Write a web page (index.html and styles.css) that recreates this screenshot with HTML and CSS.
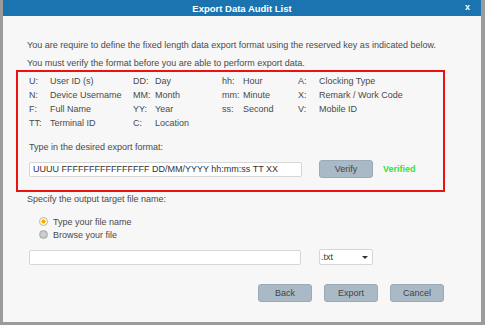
FILE: index.html
```html
<!DOCTYPE html>
<html>
<head>
<meta charset="utf-8">
<link rel="stylesheet" href="styles.css">
</head>
<body>
<div class="dialog">
  <div class="titlebar">
    <span class="title">Export Data Audit List</span>
    <span class="close">x</span>
  </div>
  <div class="content">
    <p class="line first">You are require to define the fixed length data export format using the reserved key as indicated below.</p>
    <p class="line second">You must verify the format before you are able to perform export data.</p>
    <div class="redbox">
      <div class="keys">
        <span>U:</span><span>User ID (s)</span><span>DD:</span><span>Day</span><span>hh:</span><span>Hour</span><span>A:</span><span>Clocking Type</span>
        <span>N:</span><span>Device Username</span><span>MM:</span><span>Month</span><span>mm:</span><span>Minute</span><span>X:</span><span>Remark / Work Code</span>
        <span>F:</span><span>Full Name</span><span>YY:</span><span>Year</span><span>ss:</span><span>Second</span><span>V:</span><span>Mobile ID</span>
        <span>TT:</span><span>Terminal ID</span><span>C:</span><span>Location</span><span></span><span></span><span></span><span></span>
      </div>
      <p class="line prompt">Type in the desired export format:</p>
      <div class="verify-row">
        <div class="textbox fmt">UUUU FFFFFFFFFFFFFFFF DD/MM/YYYY hh:mm:ss TT XX</div>
        <button class="btn verify">Verify</button>
        <span class="verified">Verified</span>
      </div>
    </div>
    <p class="line specify">Specify the output target file name:</p>
    <div class="radios">
      <div class="radio-row"><span class="radio on"></span><span>Type your file name</span></div>
      <div class="radio-row"><span class="radio"></span><span>Browse your file</span></div>
    </div>
    <div class="file-row">
      <div class="textbox filename"></div>
      <div class="select"><span>.txt</span><span class="arrow"></span></div>
    </div>
    <div class="actions">
      <button class="btn">Back</button>
      <button class="btn">Export</button>
      <button class="btn">Cancel</button>
    </div>
  </div>
</div>
</body>
</html>
```

FILE: styles.css
```css
html, body {
  margin: 0;
  padding: 0;
}
body {
  width: 485px;
  height: 325px;
  background: #9b9b9b;
  font-family: "Liberation Sans", Arial, sans-serif;
  font-size: 9px;
  color: #4a4a4a;
  overflow: hidden;
}
.dialog {
  margin-left: 3px;
  width: 478px;
  height: 322px;
  background: #f7f7f7;
  display: flex;
  flex-direction: column;
}
.titlebar {
  position: relative;
  height: 16px;
  background: #1b73b0;
  display: flex;
  align-items: center;
  justify-content: center;
}
.title {
  color: #ffffff;
  font-weight: bold;
  font-size: 9.5px;
}
.close {
  position: absolute;
  right: 11px;
  top: 2px;
  color: #fff;
  font-weight: bold;
  font-size: 9px;
}
.content {
  padding-left: 24px;
  display: flex;
  flex-direction: column;
}
.line {
  margin: 0;
  line-height: 12px;
}
.first {
  margin-top: 23px;
}
.second {
  margin-top: 6px;
}
.redbox {
  margin-left: -11px;
  margin-top: 1px;
  width: 414px;
  height: 116px;
  border: 2px solid #ee1111;
  padding: 2px 0 0 11px;
  box-sizing: content-box;
}
.keys {
  display: grid;
  grid-template-columns: 21px 83px 22px 67px 21px 55px 21px auto;
  grid-auto-rows: 14px;
  line-height: 14px;
  width: 410px;
}
.prompt {
  margin-top: 11px;
}
.verify-row {
  margin-top: 7px;
  display: flex;
  align-items: center;
}
.textbox {
  box-sizing: border-box;
  background: #ffffff;
  border: 1px solid #d6d6d6;
  border-radius: 2px;
  height: 15px;
  line-height: 13px;
  padding-left: 3px;
  color: #333;
}
.fmt {
  width: 273px;
}
.btn {
  font-family: "Liberation Sans", Arial, sans-serif;
  font-size: 9px;
  color: #444;
  background: #a9b9c5;
  border: 1px solid #9aaab6;
  border-radius: 3px;
  width: 54px;
  height: 18px;
  padding: 0;
}
.verify {
  margin-left: 17px;
}
.verified {
  margin-left: 10px;
  color: #36e236;
  font-weight: bold;
}
.specify {
  margin-top: 1px;
}
.radios {
  margin-top: 10px;
  padding-left: 12px;
  display: flex;
  flex-direction: column;
}
.radio-row {
  display: flex;
  align-items: center;
  height: 13px;
}
.radio {
  box-sizing: border-box;
  width: 9px;
  height: 9px;
  border-radius: 50%;
  border: 1px solid #a8a8a8;
  background: radial-gradient(circle, #d4d4d4 0, #bdbdbd 100%);
  margin-right: 5px;
}
.radio.on {
  background: radial-gradient(circle, #f2a800 0, #f2a800 35%, #fdf3d6 45%, #ffffff 100%);
  border-color: #c9b58a;
}
.file-row {
  margin-top: 8px;
  display: flex;
  align-items: center;
  padding-left: 2px;
}
.filename {
  width: 272px;
}
.select {
  box-sizing: border-box;
  margin-left: 18px;
  width: 54px;
  height: 16px;
  background: #fff;
  border: 1px solid #d6d6d6;
  border-radius: 2px;
  display: flex;
  align-items: center;
  justify-content: space-between;
  padding: 0 4px 0 1px;
  color: #333;
}
.arrow {
  width: 0;
  height: 0;
  border-left: 3px solid transparent;
  border-right: 3px solid transparent;
  border-top: 3px solid #333;
}
.actions {
  margin-top: 19px;
  margin-left: 231px;
  display: flex;
  gap: 12px;
}
```
